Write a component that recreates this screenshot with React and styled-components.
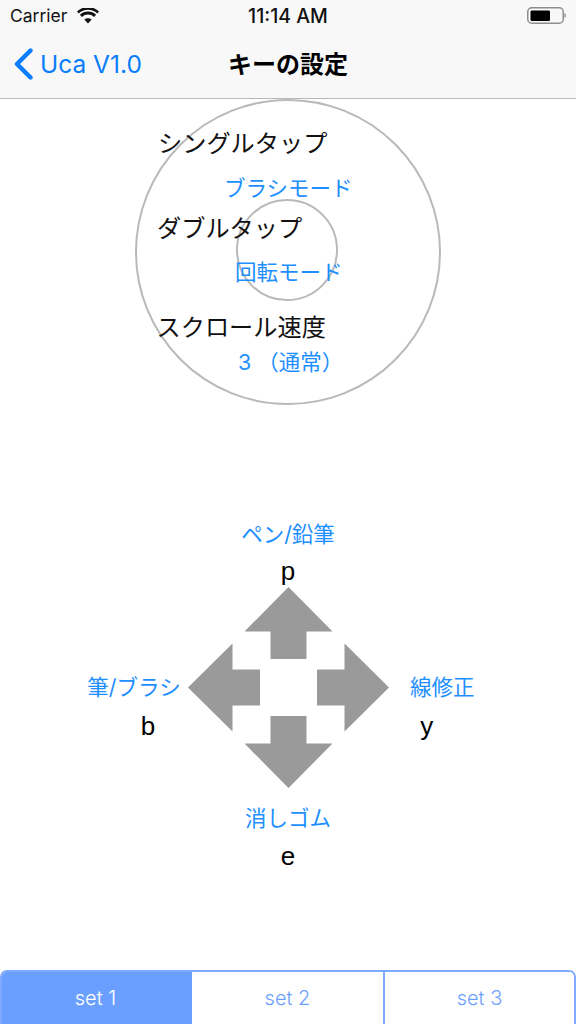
import React from 'react';
import styled, { createGlobalStyle } from 'styled-components';

const GlobalStyle = createGlobalStyle`
  html, body {
    margin: 0;
    padding: 0;
    background: #fff;
  }
  * {
    box-sizing: border-box;
  }
`;

const JP = `"Inter", "Noto Sans CJK JP", sans-serif`;

const Screen = styled.div`
  width: 576px;
  height: 1024px;
  display: flex;
  flex-direction: column;
  overflow: hidden;
  font-family: ${JP};
  background: #fff;
`;

const Header = styled.header`
  height: 99px;
  background: #f8f8f8;
  border-bottom: 1px solid #b8b8b8;
  display: flex;
  flex-direction: column;
`;

const StatusBar = styled.div`
  height: 31px;
  display: grid;
  grid-template-columns: 1fr auto 1fr;
  align-items: center;
  padding: 0 10px 0 10px;
  font-size: 17.5px;
  color: #111;
`;

const Carrier = styled.div`
  display: flex;
  align-items: center;
  gap: 10px;
`;

const Clock = styled.div`
  font-size: 19.5px;
  font-weight: 500;
`;

const Battery = styled.svg`
  justify-self: end;
`;

const NavBar = styled.nav`
  flex: 1;
  position: relative;
  display: flex;
  align-items: center;
  justify-content: center;
  padding-bottom: 4px;
`;

const BackLink = styled.div`
  position: absolute;
  left: 13px;
  top: 17px;
  display: flex;
  align-items: center;
  gap: 7px;
  color: #0a7dfb;
  font-size: 24.5px;
`;

const NavTitle = styled.h1`
  margin: 0;
  font-size: 24px;
  font-weight: 600;
  color: #000;
`;

const Dial = styled.section`
  position: relative;
  height: 306px;
  padding: 28px 0 0 158px;
`;

const Ring = styled.div`
  position: absolute;
  left: ${(p) => p.$left}px;
  top: ${(p) => p.$top}px;
  width: ${(p) => p.$size}px;
  height: ${(p) => p.$size}px;
  border: 2px solid #b9b9b9;
  border-radius: 50%;
`;

const DialLabel = styled.div`
  position: relative;
  height: ${(p) => p.$height}px;
  margin-left: ${(p) => p.$indent || 0}px;
  font-size: 24.2px;
  line-height: 34px;
  color: #111;
  white-space: nowrap;
`;

const DialValue = styled.div`
  position: relative;
  height: ${(p) => p.$height}px;
  margin-left: ${(p) => p.$indent}px;
  font-size: 21.5px;
  line-height: 30px;
  color: #1e8fff;
  white-space: nowrap;
`;

const KeyPad = styled.section`
  margin-top: 114px;
  display: flex;
  flex-direction: column;
  align-items: center;
`;

const KeyStack = styled.div`
  display: flex;
  flex-direction: column;
  align-items: center;
  gap: ${(p) => p.$gap || 8}px;
`;

const KeyRow = styled.div`
  width: 100%;
  display: grid;
  grid-template-columns: 187.5px 201px 1fr;
  align-items: center;
  margin-top: ${(p) => p.$top || 0}px;
  margin-bottom: ${(p) => p.$bottom || 0}px;
`;

const SideKey = styled.div`
  display: flex;
  flex-direction: column;
  align-items: center;
  margin: 0 ${(p) => p.$right || 0}px 0 ${(p) => p.$left || 0}px;
  padding-top: 37px;
`;

const KeyLabel = styled.div`
  font-size: 21.5px;
  line-height: 30px;
  color: #1e8fff;
  white-space: nowrap;
`;

const KeyLetter = styled.div`
  font-family: "Liberation Sans", sans-serif;
  font-size: 26px;
  line-height: 30px;
  color: #000;
  margin-top: ${(p) => p.$top || 0}px;
  margin-left: ${(p) => p.$shift || 0}px;
`;

const Segments = styled.div`
  margin-top: auto;
  height: 54px;
  display: grid;
  grid-template-columns: 190px 191px 1fr;
  border: 2px solid #7eaaff;
  border-bottom: none;
  border-radius: 7px 7px 0 0;
  overflow: hidden;
`;

const Segment = styled.button`
  border: none;
  border-left: ${(p) => (p.$divider ? '2px solid #7eaaff' : 'none')};
  padding: 0 ${(p) => (p.$active ? 3 : 0)}px 0 0;
  margin: 0;
  font-family: "Inter", sans-serif;
  font-size: 20px;
  font-weight: 300;
  color: ${(p) => (p.$active ? '#fff' : '#6ea1ff')};
  background: ${(p) => (p.$active ? '#6a9fff' : '#fff')};
`;

const WifiIcon = () => (
  <svg width="22" height="16" viewBox="0 0 22 16">
    <path
      fill="#111"
      d="M11 15.5 7.4 11.6a5.2 5.2 0 0 1 7.2 0L11 15.5ZM4.9 8.9 2.9 6.7a11.8 11.8 0 0 1 16.2 0l-2 2.2a8.8 8.8 0 0 0-12.2 0ZM1.7 5.4 0 3.5a15.8 15.8 0 0 1 22 0l-1.7 1.9a13.4 13.4 0 0 0-18.6 0Z"
    />
  </svg>
);

const BatteryIcon = () => (
  <Battery width="39" height="17" viewBox="0 0 39 17">
    <rect x="0.75" y="0.75" width="35.5" height="15.5" rx="4" fill="none" stroke="#8e8e8e" strokeWidth="1.5" />
    <rect x="3.5" y="3.5" width="19.5" height="10.5" rx="1.2" fill="#000" />
    <path d="M37.5 6c.9.4 1.5 1.3 1.5 2.5s-.6 2.1-1.5 2.5Z" fill="#8e8e8e" />
  </Battery>
);

const ChevronIcon = () => (
  <svg width="20" height="32" viewBox="0 0 20 32">
    <path d="M17.5 2.5 4 16l13.5 13.5" fill="none" stroke="#0a7dfb" strokeWidth="4.4" strokeLinecap="round" strokeLinejoin="round" />
  </svg>
);

// drawn around the pad's centre, each arrow is the "up" shape rotated
const ArrowPad = () => (
  <svg width="201" height="201" viewBox="0 0 201 201">
    {[0, 90, 180, 270].map((deg) => (
      <polygon
        key={deg}
        points="100.5,0 144.5,44.5 118.5,44.5 118.5,72 82.5,72 82.5,44.5 56.5,44.5"
        fill="#9a9a9a"
        transform={`rotate(${deg} 100.5 100.5)`}
      />
    ))}
  </svg>
);

export default function App() {
  return (
    <>
      <GlobalStyle />
      <Screen>
        <Header>
          <StatusBar>
            <Carrier>
              Carrier
              <WifiIcon />
            </Carrier>
            <Clock>11:14 AM</Clock>
            <BatteryIcon />
          </StatusBar>
          <NavBar>
            <BackLink>
              <ChevronIcon />
              Uca V1.0
            </BackLink>
            <NavTitle>キーの設定</NavTitle>
          </NavBar>
        </Header>

        <Dial>
          <Ring $left={135} $top={0} $size={306} />
          <Ring $left={235.5} $top={100} $size={102} />
          <DialLabel $height={46}>シングルタップ</DialLabel>
          <DialValue $height={39} $indent={66}>ブラシモード</DialValue>
          <DialLabel $height={45} $indent={-1}>ダブルタップ</DialLabel>
          <DialValue $height={54} $indent={77}>回転モード</DialValue>
          <DialLabel $height={36} $indent={-1.5}>スクロール速度</DialLabel>
          <DialValue $height={30} $indent={80}>3 （通常）</DialValue>
        </Dial>

        <KeyPad>
          <KeyStack $gap={7}>
            <KeyLabel>ペン/鉛筆</KeyLabel>
            <KeyLetter>p</KeyLetter>
          </KeyStack>
          <KeyRow $top={1} $bottom={15}>
            <SideKey $left={88} $right={7.5}>
              <KeyLabel>筆/ブラシ</KeyLabel>
              <KeyLetter $top={9} $shift={28}>b</KeyLetter>
            </SideKey>
            <ArrowPad />
            <SideKey $left={2} $right={82}>
              <KeyLabel>線修正</KeyLabel>
              <KeyLetter $top={9} $shift={-31}>y</KeyLetter>
            </SideKey>
          </KeyRow>
          <KeyStack>
            <KeyLabel>消しゴム</KeyLabel>
            <KeyLetter>e</KeyLetter>
          </KeyStack>
        </KeyPad>

        <Segments>
          <Segment $active>set 1</Segment>
          <Segment>set 2</Segment>
          <Segment $divider>set 3</Segment>
        </Segments>
      </Screen>
    </>
  );
}
